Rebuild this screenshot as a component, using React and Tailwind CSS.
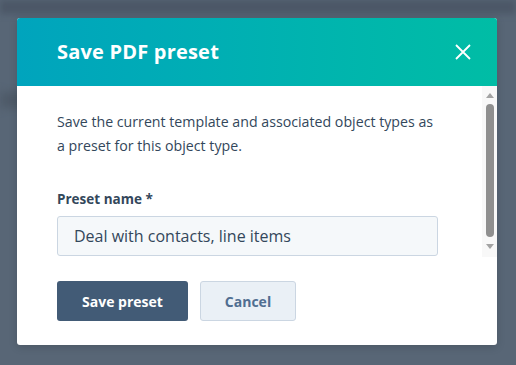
export default function App() {
  return (
    <div
      className="relative w-[516px] h-[365px] overflow-hidden bg-[#586676]"
      style={{ fontFamily: '"Open Sans", "Noto Sans", sans-serif' }}
    >
      <div className="absolute inset-x-0 top-0 h-[14px] bg-[#4c5767] blur-[3px]" />
      <div className="absolute left-0 top-[92px] h-[16px] w-[30px] bg-[#4e5a68] blur-[4px]" />
      <div className="absolute left-[17px] top-[18px] w-[480px] flex flex-col bg-white rounded-[3px] overflow-hidden shadow-[0_2px_8px_rgba(0,0,0,0.15)]">
        <div className="h-[68px] flex items-center justify-between pl-[40px] pr-[26px] bg-linear-to-r from-[#00a4bd] to-[#00bda5]">
          <h1 className="text-[20px] font-bold text-white tracking-[0.2px]">
            Save PDF preset
          </h1>
          <svg width="16" height="16" viewBox="0 0 16 16" className="text-white">
            <path d="M1 1 L15 15 M15 1 L1 15" stroke="currentColor" strokeWidth="1.8" fill="none" />
          </svg>
        </div>
        <div className="h-[171px] flex">
          <div className="flex-1 overflow-hidden pl-10 pt-6 text-[#33475b]">
            <p className="text-[14.2px] leading-[24px] w-[381px]">
              Save the current template and associated object types as a preset for this object type.
            </p>
            <label className="block mt-[31px] text-[13.5px] leading-[20px] font-bold">Preset name *</label>
            <div className="mt-[7px] w-[381px] h-[40px] flex items-center px-4 bg-[#f5f8fa] border border-[#cbd6e2] rounded-[3px] text-[16px]">
              Deal with contacts, line items
            </div>
          </div>
          <div className="w-[15px] flex flex-col items-center bg-[#f8f8f8]">
            <svg width="8" height="5" viewBox="0 0 8 5" className="mt-[7px] shrink-0">
              <path d="M0 5 L4 0 L8 5 Z" fill="#a3a3a3" />
            </svg>
            <div className="mt-[6px] w-[8px] h-[133px] rounded-full bg-[#8f8f8f]" />
            <svg width="8" height="5" viewBox="0 0 8 5" className="mt-[7px] shrink-0">
              <path d="M0 0 L8 0 L4 5 Z" fill="#a3a3a3" />
            </svg>
          </div>
        </div>
        <div className="flex gap-3 px-10 pt-[24px] pb-[24px]">
          <button className="h-[40px] w-[131px] bg-[#425b76] text-white text-[14px] font-bold rounded-[3px]">
            Save preset
          </button>
          <button className="h-[40px] w-[96px] bg-[#eaf0f6] text-[#506e91] border border-[#cbd6e2] text-[14px] font-bold rounded-[3px]">
            Cancel
          </button>
        </div>
      </div>
    </div>
  );
}
